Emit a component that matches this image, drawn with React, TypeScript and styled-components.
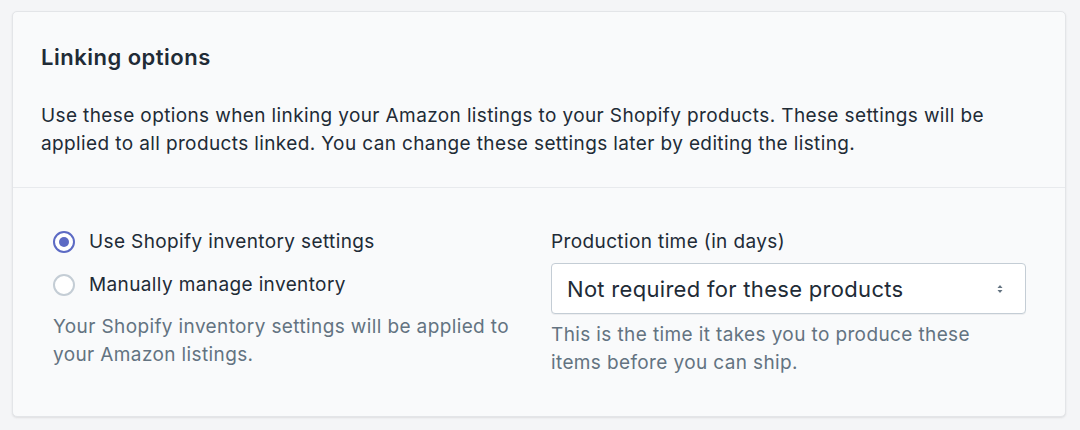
import React from "react";
import styled, { createGlobalStyle } from "styled-components";

const Global = createGlobalStyle`
  html, body { margin: 0; padding: 0; background: #f4f5f7; }
  body {
    font-family: Inter, "Open Sans", "Liberation Sans", sans-serif;
    -webkit-font-smoothing: antialiased;
  }
`;

const Page = styled.div`
  padding: 11px 14px 14px 12px;
`;

const Card = styled.div`
  background: #f9fafb;
  border: 1px solid #e3e5e8;
  border-radius: 5px;
  box-shadow: 0 1px 2px rgba(63, 63, 68, 0.12);
  overflow: hidden;
`;

const Header = styled.div`
  padding: 31px 28px 29px;
  border-bottom: 1px solid #e8eaed;
`;

const Title = styled.h2`
  margin: 0 0 31px;
  font-size: 22px;
  line-height: 28px;
  font-weight: 600;
  letter-spacing: 0.5px;
  color: #212b36;
`;

const Body = styled.p`
  margin: 0;
  font-size: 19px;
  line-height: 28px;
  letter-spacing: 0.38px;
  color: #212b36;
`;

const Section = styled.div`
  display: grid;
  grid-template-columns: 1fr 475px;
  column-gap: 23px;
  padding: 40px 39px 39px 40px;
`;

const Column = styled.div`
  display: flex;
  flex-direction: column;
`;

const RadioRow = styled.label`
  display: flex;
  align-items: center;
  gap: 14px;
  font-size: 19px;
  line-height: 28px;
  letter-spacing: 0.38px;
  color: #212b36;
  & + & {
    margin-top: 15px;
  }
`;

const RadioCircle = styled.span<{ $checked?: boolean }>`
  box-sizing: border-box;
  width: 22px;
  height: 22px;
  border-radius: 50%;
  background: #fff;
  border: 2px solid ${(p) => (p.$checked ? "#5c6ac4" : "#c4cdd5")};
  display: flex;
  align-items: center;
  justify-content: center;
  flex-shrink: 0;
  &::after {
    content: "";
    width: 10px;
    height: 10px;
    border-radius: 50%;
    background: #5c6ac4;
    display: ${(p) => (p.$checked ? "block" : "none")};
  }
`;

const Help = styled.p<{ $top: number }>`
  margin: ${(p) => p.$top}px 0 0;
  font-size: 19px;
  line-height: 28px;
  letter-spacing: 0.38px;
  color: #637381;
`;

const Label = styled.div`
  font-size: 19px;
  line-height: 28px;
  letter-spacing: 0.38px;
  color: #212b36;
  margin-bottom: 7px;
`;

const Select = styled.div`
  box-sizing: border-box;
  height: 51px;
  display: flex;
  align-items: center;
  justify-content: space-between;
  padding: 0 21px 0 15px;
  background: #fff;
  border: 1px solid #c4cdd5;
  border-radius: 4px;
  box-shadow: 0 1px 0 rgba(22, 29, 37, 0.05);
  font-size: 22px;
  letter-spacing: 0.3px;
  color: #212b36;
`;

const Arrows = () => (
  <svg width="8" height="12" viewBox="0 0 8 12" aria-hidden>
    <path d="M4 2 L6.5 5 H1.5 Z" fill="#637381" />
    <path d="M4 10 L6.5 7 H1.5 Z" fill="#637381" />
  </svg>
);

export default function App() {
  return (
    <>
      <Global />
      <Page>
        <Card>
          <Header>
            <Title>Linking options</Title>
            <Body>
              Use these options when linking your Amazon listings to your Shopify products. These settings will be
              applied to all products linked. You can change these settings later by editing the listing.
            </Body>
          </Header>
          <Section>
            <Column>
              <RadioRow>
                <RadioCircle $checked />
                Use Shopify inventory settings
              </RadioRow>
              <RadioRow>
                <RadioCircle />
                Manually manage inventory
              </RadioRow>
              <Help $top={14}>
                Your Shopify inventory settings will be applied to your Amazon listings.
              </Help>
            </Column>
            <Column>
              <Label>Production time (in days)</Label>
              <Select>
                <span>Not required for these products</span>
                <Arrows />
              </Select>
              <Help $top={7}>
                This is the time it takes you to produce these
                <br />
                items before you can ship.
              </Help>
            </Column>
          </Section>
        </Card>
      </Page>
    </>
  );
}
